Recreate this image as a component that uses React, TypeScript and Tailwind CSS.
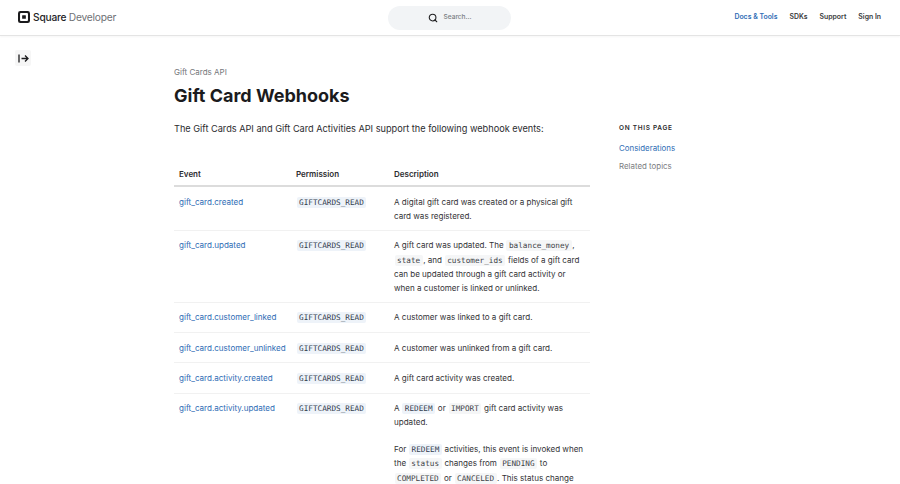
import { Search } from 'lucide-react';
import type { ReactNode } from 'react';

const mono = "font-['DejaVu_Sans_Mono','Liberation_Mono',monospace]";

function Code({ children, blue }: { children: ReactNode; blue?: boolean }) {
  return (
    <code className={`${mono} mx-[0.5px] rounded-[2px] px-[2.5px] py-[1px] text-[7.7px] leading-none ${blue ? 'bg-[#eef3f9] text-[#333d4e]' : 'bg-[#f5f6f7] text-[#3f4347]'}`}>
      {children}
    </code>
  );
}

function Row({ event, children }: { event: string; children: ReactNode }) {
  return (
    <tr className="border-b border-[#f1f1f1] align-top">
      <td className="px-[5px] pb-[6.5px] pt-[7.5px] text-[#2f6db5]">{event}</td>
      <td className="px-[5px] pb-[6.5px] pt-[7.5px] leading-[15.3px]"><Code blue>GIFTCARDS_READ</Code></td>
      <td className="px-[5px] pb-[6.5px] pt-[7.5px] text-[#333336]">{children}</td>
    </tr>
  );
}

export default function App() {
  return (
    <div className="h-[484px] w-[900px] overflow-hidden bg-white font-['Inter',sans-serif]">
      {/* Top nav */}
      <header className="flex h-[36px] items-center justify-between border-b border-[#e4e4e4] pl-[18px] pr-[19px] shadow-[0_1px_2px_rgba(0,0,0,0.04)]">
        <div className="flex w-[370px] items-center gap-[2.5px]">
          <svg width="12" height="12" viewBox="0 0 13 13" className="mr-[0.5px]">
            <rect x="0" y="0" width="13" height="13" rx="2.5" fill="#1b1b1d" />
            <rect x="2.2" y="2.2" width="8.6" height="8.6" rx="1" fill="#fff" />
            <rect x="4.5" y="4.5" width="4" height="4" rx="0.5" fill="#1b1b1d" />
          </svg>
          <span className="text-[10.2px] font-medium tracking-[-0.2px] text-[#232326]">Square</span>
          <span className="text-[10.2px] tracking-[-0.2px] text-[#6f7175]">Developer</span>
        </div>
        <div className="flex h-[24px] w-[124px] items-center justify-center gap-[5px] rounded-full bg-[#f2f4f6] pl-[1px]">
          <Search size={10} strokeWidth={2.6} className="text-[#1f1f21]" />
          <span className="text-[6.6px] font-medium text-[#7b7e83]">Search...</span>
        </div>
        <nav className="flex w-[370px] items-center justify-end gap-[12px] text-[6.9px] font-semibold text-[#37383b]">
          <span className="text-[#2f6db5]">Docs &amp; Tools</span>
          <span>SDKs</span>
          <span>Support</span>
          <span>Sign In</span>
        </nav>
      </header>

      <div className="flex">
        {/* Side toggle */}
        <div className="w-[174px] shrink-0 pl-[15px] pt-[14px]">
          <div className="flex h-[16px] w-[16px] items-center justify-center rounded-[2px] bg-[#f6f6f6]">
            <svg width="11" height="9" viewBox="0 0 11 9" fill="none" stroke="#1b1b1d" strokeWidth="1.3">
              <path d="M1 0.5v8M3.5 4.5h6.5M7 1.5l3 3-3 3" />
            </svg>
          </div>
        </div>

        {/* Article */}
        <main className="w-[416px] shrink-0 pt-[30px]">
          <p className="text-[8px] leading-[12px] text-[#75777b]">Gift Cards API</p>
          <h1 className="mt-[3px] text-[18px] font-bold leading-[30px] text-[#1b1b1d]">Gift Card Webhooks</h1>
          <p className="mt-[10px] text-[9.18px] leading-[16px] text-[#2c2c2f]">The Gift Cards API and Gift Card Activities API support the following webhook events:</p>
          <table className="mt-[22px] w-[416px] table-fixed border-collapse text-[8.05px] leading-[14.25px]">
            <colgroup>
              <col className="w-[117px]" />
              <col className="w-[98px]" />
              <col />
            </colgroup>
            <thead>
              <tr className="border-b-2 border-[#dcdcdc] text-left text-[8px] font-semibold text-[#2c2c2f]">
                <th className="px-[5px] pb-[4px] pt-[8px] font-semibold">Event</th>
                <th className="px-[5px] pb-[4px] pt-[8px] font-semibold">Permission</th>
                <th className="px-[5px] pb-[4px] pt-[8px] font-semibold">Description</th>
              </tr>
            </thead>
            <tbody>
              <Row event="gift_card.created">A digital gift card was created or a physical gift card was registered.</Row>
              <Row event="gift_card.updated">
                A gift card was updated. The <Code>balance_money</Code>, <Code>state</Code>, and <Code>customer_ids</Code> fields of a gift card can be updated through a gift card activity or when a customer is linked or unlinked.
              </Row>
              <Row event="gift_card.customer_linked">A customer was linked to a gift card.</Row>
              <Row event="gift_card.customer_unlinked">A customer was unlinked from a gift card.</Row>
              <Row event="gift_card.activity.created">A gift card activity was created.</Row>
              <Row event="gift_card.activity.updated">
                <p>A <Code blue>REDEEM</Code> or <Code>IMPORT</Code> gift card activity was updated.</p>
                <p className="mt-[12.5px]">
                  For <Code blue>REDEEM</Code> activities, this event is invoked when the <Code>status</Code> changes from <Code>PENDING</Code> to <Code>COMPLETED</Code> or <Code>CANCELED</Code>. This status change
                </p>
              </Row>
            </tbody>
          </table>
        </main>

        {/* On this page */}
        <aside className="ml-[29px] pt-[88px]">
          <p className="text-[6.5px] font-semibold uppercase tracking-[0.7px] text-[#2c2c2f]">On this page</p>
          <p className="mt-[8px] text-[7.9px] leading-[12px] text-[#2f6db5]">Considerations</p>
          <p className="mt-[6px] text-[7.9px] leading-[12px] text-[#7b7d81]">Related topics</p>
        </aside>
      </div>
    </div>
  );
}
